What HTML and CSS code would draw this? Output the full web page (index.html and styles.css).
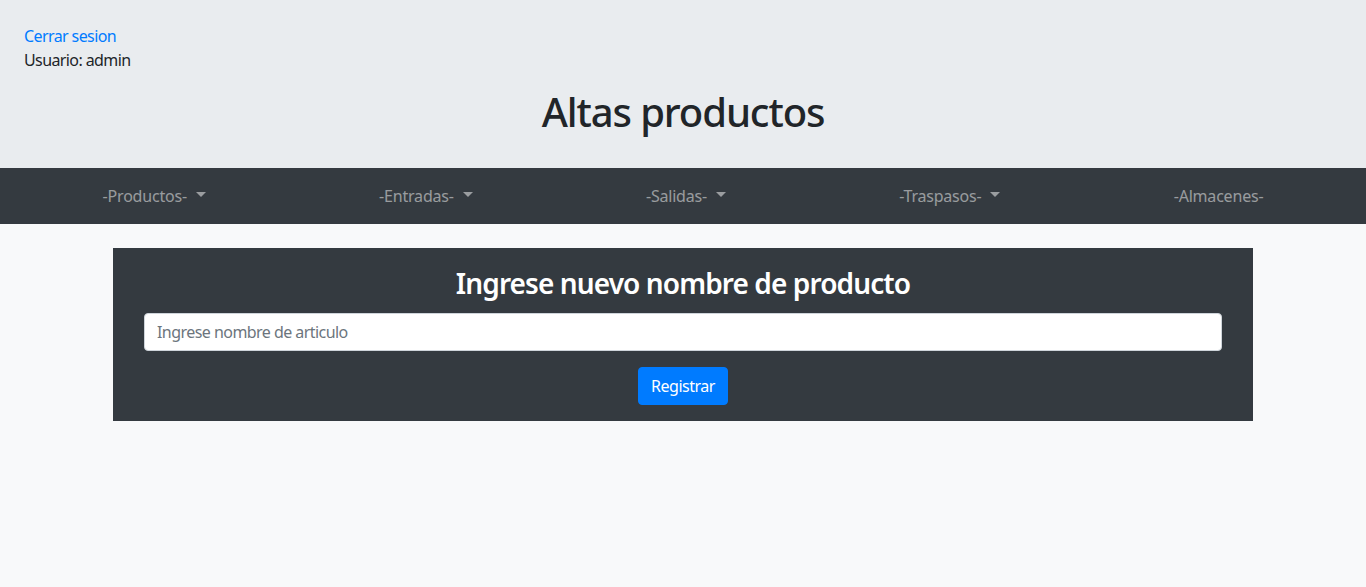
FILE: index.html
```html
<!DOCTYPE html>
<html lang="es">
<head>
<meta charset="utf-8">
<title>Altas productos</title>
<link rel="stylesheet" href="styles.css">
</head>
<body>
<header class="jumbotron">
  <a class="logout" href="#">Cerrar sesion</a>
  <div class="user">Usuario: admin</div>
  <h1 class="title">Altas productos</h1>
</header>
<nav class="navbar">
  <a class="nav-link" href="#">-Productos-<span class="caret"></span></a>
  <a class="nav-link" href="#">-Entradas-<span class="caret"></span></a>
  <a class="nav-link" href="#">-Salidas-<span class="caret"></span></a>
  <a class="nav-link" href="#">-Traspasos-<span class="caret"></span></a>
  <a class="nav-link" href="#">-Almacenes-</a>
</nav>
<main class="panel">
  <h3 class="panel-title">Ingrese nuevo nombre de producto</h3>
  <form class="form">
    <input class="field" type="text" placeholder="Ingrese nombre de articulo">
    <button class="btn" type="button">Registrar</button>
  </form>
</main>
</body>
</html>
```

FILE: styles.css
```css
* { box-sizing: border-box; }
html, body {
  margin: 0;
  background: #f8f9fa;
  font-family: "Noto Sans", "Open Sans", sans-serif;
  font-size: 16px;
  line-height: 24px;
  color: #212529;
}
.jumbotron {
  background: #e9ecef;
  padding: 24px 24px 32px;
}
.logout {
  display: block;
  color: #007bff;
  text-decoration: none;
  width: max-content;
  letter-spacing: -0.6px;
}
.user {
  display: block;
  letter-spacing: -0.6px;
}
.title {
  margin: 16px 0 0;
  font-size: 40px;
  line-height: 48px;
  font-weight: 500;
  text-align: center;
  letter-spacing: -1.1px;
}
.navbar {
  background: #343a40;
  height: 56px;
  padding: 8px 16px;
  display: flex;
  justify-content: space-around;
  align-items: center;
}
.nav-link {
  color: rgba(255, 255, 255, 0.5);
  text-decoration: none;
  padding: 8px;
  display: flex;
  align-items: center;
  letter-spacing: -0.2px;
}
.caret {
  display: inline-block;
  margin-left: 9px;
  border-top: 5px solid rgba(255, 255, 255, 0.5);
  border-left: 5px solid transparent;
  border-right: 5px solid transparent;
  margin-top: -3px;
}
.panel {
  width: 1140px;
  margin: 24px auto 0;
  background: #343a40;
  padding: 16px 31px;
}
.panel-title {
  margin: 0 0 15px;
  color: #fff;
  font-size: 28px;
  line-height: 34px;
  font-weight: 600;
  text-align: center;
  letter-spacing: -0.9px;
  padding-top: 2px;
}
.form {
  display: flex;
  flex-direction: column;
  align-items: center;
  gap: 16px;
  margin-top: -2px;
}
.field {
  width: 100%;
  height: 38px;
  padding: 6px 12px;
  border: 1px solid #ced4da;
  border-radius: 4px;
  background: #fff;
  font: inherit;
  color: #495057;
  letter-spacing: -0.55px;
}
.field::placeholder { color: #6c757d; }
.btn {
  height: 38px;
  padding: 6px 12px;
  background: #007bff;
  border: 1px solid #007bff;
  border-radius: 4px;
  color: #fff;
  font: inherit;
  line-height: 24px;
  letter-spacing: -0.5px;
}
```
